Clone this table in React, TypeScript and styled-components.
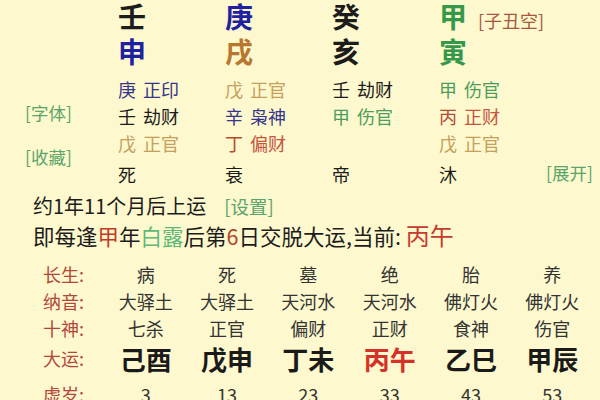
import React from 'react';
import styled, { createGlobalStyle } from 'styled-components';

const BG = '#fdf8cd';
const INK = '#1c1c1c';
const BLUE = '#1f22a0';
const NAVY = '#35358a';
const OCHRE = '#b8772f';
const GREEN = '#35984a';
const SOFTGREEN = '#4e9d5e';
const TAN = '#c4a05c';
const RUST = '#b34a33';
const CORAL = '#c65440';
const LINK = '#5aa56c';

const Global = createGlobalStyle`
  html, body { margin: 0; padding: 0; background: ${BG}; }
  body {
    font-family: "Noto Sans CJK SC", "Noto Sans", sans-serif;
    color: ${INK};
    width: 600px;
    height: 400px;
    overflow: hidden;
  }
`;

const Page = styled.div`
  width: 600px;
  height: 400px;
  overflow: hidden;
  background: ${BG};
`;

const Chart = styled.div`
  display: flex;
  height: 188px;
`;

const SideCol = styled.div`
  width: 118px;
  flex: none;
  box-sizing: border-box;
  padding: 101px 0 0 25px;
  display: flex;
  flex-direction: column;
  align-items: flex-start;
  gap: 20px;
`;

const Tag = styled.span<{ $tone?: 'green' | 'brown'; $size?: number }>`
  font-size: ${(p) => p.$size ?? 17.5}px;
  line-height: 24px;
  font-weight: 400;
  white-space: nowrap;
  color: ${(p) => (p.$tone === 'brown' ? '#a8573d' : LINK)};
`;

const Pillar = styled.div`
  width: 107px;
  flex: none;
  display: flex;
  flex-direction: column;
`;

const Glyph = styled.div<{ $c: string; $h: number }>`
  height: ${(p) => p.$h}px;
  line-height: ${(p) => p.$h}px;
  font-size: 28px;
  font-weight: 700;
  color: ${(p) => p.$c};
  white-space: nowrap;
`;

const VoidTag = styled(Tag)`
  margin-left: 11px;
`;

const HiddenList = styled.div`
  margin-top: 6px;
  height: 81px;
  display: flex;
  flex-direction: column;
`;

const HiddenLine = styled.div`
  height: 27px;
  line-height: 27px;
  font-size: 18px;
  white-space: nowrap;
`;

const HStem = styled.span<{ $c: string }>`
  color: ${(p) => p.$c};
  margin-right: 7px;
`;

const HGod = styled.span<{ $c: string }>`
  color: ${(p) => p.$c};
`;

const State = styled.div`
  margin-top: 4px;
  height: 27px;
  line-height: 27px;
  font-size: 18px;
  color: ${INK};
`;

const RightCol = styled.div`
  flex: 1;
  display: flex;
  flex-direction: column;
  justify-content: flex-end;
  align-items: flex-end;
  padding: 0 10px 3px 0;
`;

const Info = styled.div`
  margin-top: 3px;
  padding-left: 33px;
  line-height: 29px;
  color: ${INK};
`;

const InfoLine = styled.div<{ $size: number }>`
  white-space: nowrap;
  font-size: ${(p) => p.$size}px;
`;

const Mark = styled.span<{ $c: string; $size?: number }>`
  color: ${(p) => p.$c};
  ${(p) => (p.$size ? `font-size: ${p.$size}px;` : '')}
`;

const SetLink = styled(Tag)`
  margin-left: 18px;
`;

const Table = styled.div`
  margin-top: 11px;
  padding: 0 7px 0 43px;
`;

const TRow = styled.div<{ $h: number; $gap?: number }>`
  display: grid;
  grid-template-columns: 62px repeat(6, 1fr);
  height: ${(p) => p.$h}px;
  line-height: ${(p) => p.$h}px;
  margin-top: ${(p) => p.$gap ?? 0}px;
  align-items: center;
`;

const RowLabel = styled.div`
  font-size: 18px;
  color: #b2473b;
  white-space: nowrap;
`;

const Cell = styled.div<{ $big?: boolean; $hot?: boolean }>`
  text-align: center;
  white-space: nowrap;
  font-size: ${(p) => (p.$big ? 26 : 18)}px;
  font-weight: ${(p) => (p.$big ? 700 : 400)};
  color: ${(p) => (p.$hot ? '#d3322b' : p.$big ? '#1a1a1a' : '#333')};
`;

type Hidden = { s: string; g: string; sc: string; gc: string };
type PillarData = {
  stem: string;
  stemC: string;
  branch: string;
  branchC: string;
  hidden: Hidden[];
  state: string;
  tag?: string;
};

const pillars: PillarData[] = [
  {
    stem: '壬',
    stemC: INK,
    branch: '申',
    branchC: BLUE,
    hidden: [
      { s: '庚', g: '正印', sc: NAVY, gc: NAVY },
      { s: '壬', g: '劫财', sc: INK, gc: INK },
      { s: '戊', g: '正官', sc: TAN, gc: TAN },
    ],
    state: '死',
  },
  {
    stem: '庚',
    stemC: BLUE,
    branch: '戌',
    branchC: OCHRE,
    hidden: [
      { s: '戊', g: '正官', sc: TAN, gc: TAN },
      { s: '辛', g: '枭神', sc: NAVY, gc: NAVY },
      { s: '丁', g: '偏财', sc: RUST, gc: CORAL },
    ],
    state: '衰',
  },
  {
    stem: '癸',
    stemC: INK,
    branch: '亥',
    branchC: INK,
    hidden: [
      { s: '壬', g: '劫财', sc: INK, gc: INK },
      { s: '甲', g: '伤官', sc: SOFTGREEN, gc: SOFTGREEN },
    ],
    state: '帝',
  },
  {
    stem: '甲',
    stemC: GREEN,
    branch: '寅',
    branchC: GREEN,
    hidden: [
      { s: '甲', g: '伤官', sc: SOFTGREEN, gc: SOFTGREEN },
      { s: '丙', g: '正财', sc: RUST, gc: CORAL },
      { s: '戊', g: '正官', sc: TAN, gc: TAN },
    ],
    state: '沐',
    tag: '[子丑空]',
  },
];

const table: { label: string; values: string[]; big?: boolean; h: number; gap?: number }[] = [
  { label: '长生:', values: ['病', '死', '墓', '绝', '胎', '养'], h: 27 },
  { label: '纳音:', values: ['大驿土', '大驿土', '天河水', '天河水', '佛灯火', '佛灯火'], h: 27 },
  { label: '十神:', values: ['七杀', '正官', '偏财', '正财', '食神', '伤官'], h: 27 },
  { label: '大运:', values: ['己酉', '戊申', '丁未', '丙午', '乙巳', '甲辰'], big: true, h: 33 },
  { label: '虚岁:', values: ['3', '13', '23', '33', '43', '53'], h: 27, gap: 6 },
];

export default function App() {
  return (
    <Page>
      <Global />
      <Chart>
        <SideCol>
          <Tag>[字体]</Tag>
          <Tag>[收藏]</Tag>
        </SideCol>
        {pillars.map((p, i) => (
          <Pillar key={i}>
            <Glyph $c={p.stemC} $h={32}>
              {p.stem}
              {p.tag && <VoidTag $tone="brown" $size={18}>{p.tag}</VoidTag>}
            </Glyph>
            <Glyph $c={p.branchC} $h={38}>
              {p.branch}
            </Glyph>
            <HiddenList>
              {p.hidden.map((h, j) => (
                <HiddenLine key={j}>
                  <HStem $c={h.sc}>{h.s}</HStem>
                  <HGod $c={h.gc}>{h.g}</HGod>
                </HiddenLine>
              ))}
            </HiddenList>
            <State>{p.state}</State>
          </Pillar>
        ))}
        <RightCol>
          <Tag>[展开]</Tag>
        </RightCol>
      </Chart>
      <Info>
        <InfoLine $size={20}>
          约1年11个月后上运<SetLink $size={18.5}>[设置]</SetLink>
        </InfoLine>
        <InfoLine $size={21.5}>
          即每逢<Mark $c="#c4392b">甲</Mark>年<Mark $c="#5fb878">白露</Mark>后第
          <Mark $c="#b5452a">6</Mark>日交脱大运,当前: <Mark $c="#c63b2e" $size={24}>丙午</Mark>
        </InfoLine>
      </Info>
      <Table>
        {table.map((r) => (
          <TRow key={r.label} $h={r.h} $gap={r.gap}>
            <RowLabel>{r.label}</RowLabel>
            {r.values.map((v, k) => (
              <Cell key={k} $big={r.big} $hot={r.big && v === '丙午'}>
                {v}
              </Cell>
            ))}
          </TRow>
        ))}
      </Table>
    </Page>
  );
}
